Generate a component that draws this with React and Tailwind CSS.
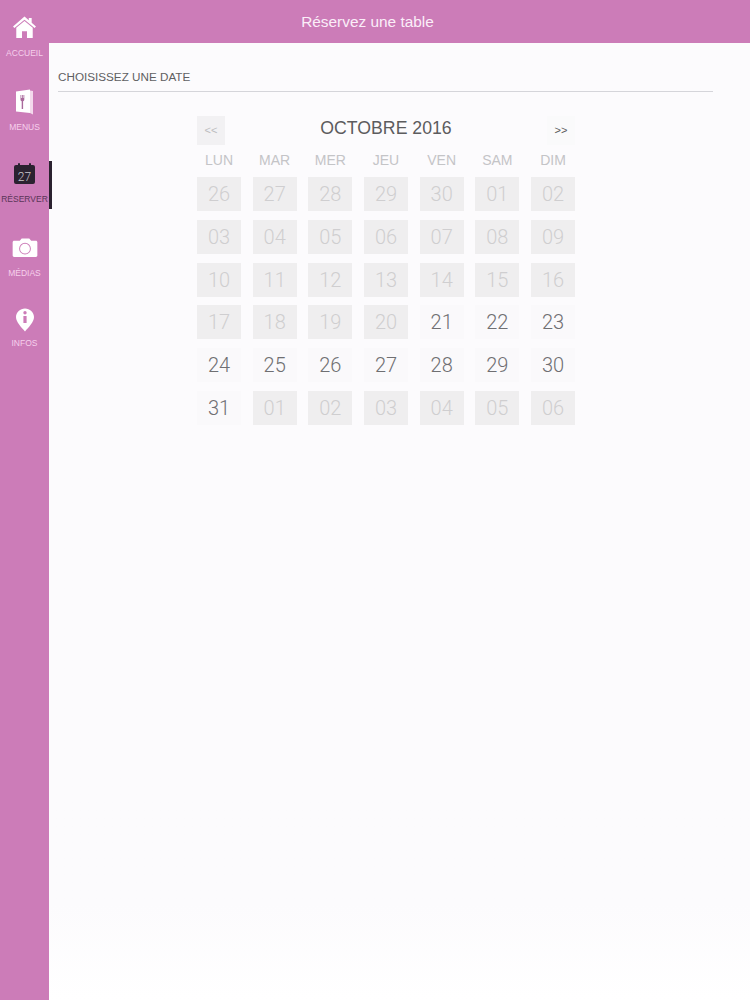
import React from 'react';

const HomeIcon = () => (
  <svg width="23" height="22" viewBox="0 0 24 23" fill="#ffffff">
    <path d="M12 0.5 L16.5 4.4 V2 H19.5 V7 L24 11 L22.6 12.6 L12 3.8 L1.4 12.6 L0 11 Z" />
    <path d="M3.4 12.4 L12 5.2 L20.6 12.4 V23 H14.6 V16 H9.4 V23 H3.4 Z" />
  </svg>
);

const MenuIcon = () => (
  <svg width="19" height="26" viewBox="0 0 19 26" className="translate-y-[1px]">
    <path fill="#ffffff" d="M1 2.5 L15 0.5 V24 L1 22.5 Z" />
    <path fill="#f3d9ec" d="M15 1.5 L18 2 V25.5 L15 24 Z" />
    <path fill="#a9699b" d="M5.5 6 H6.3 V9 H7 V6 H7.8 V9 H8.5 V6 H9.3 V10.5 C9.3 11.5 8.7 12 8.1 12.2 V20 H6.7 V12.2 C6.1 12 5.5 11.5 5.5 10.5 Z" />
  </svg>
);

const CalendarIcon = () => (
  <div className="relative mt-[2px] flex h-[19px] w-[21px] items-end justify-center rounded-[2px] bg-[#2b2230]">
    <span className="absolute -top-[2px] left-[4px] h-[5px] w-[2px] rounded-sm bg-[#2b2230]" />
    <span className="absolute -top-[2px] right-[4px] h-[5px] w-[2px] rounded-sm bg-[#2b2230]" />
    <span className="font-['Roboto',sans-serif] text-[12px] leading-[14px] font-light text-[#c9c5cb]">27</span>
  </div>
);

const CameraIcon = () => (
  <svg width="26" height="19" viewBox="0 0 26 20" className="mt-[1px]">
    <path
      fill="#ffffff"
      fillRule="evenodd"
      d="M1.5 3 H7.5 L9.5 0.5 H17.5 L19.5 3 H24.5 C25.3 3 26 3.7 26 4.5 V18.5 C26 19.3 25.3 20 24.5 20 H1.5 C0.7 20 0 19.3 0 18.5 V4.5 C0 3.7 0.7 3 1.5 3 Z M13 5 A6.2 6.2 0 1 0 13 17.4 A6.2 6.2 0 1 0 13 5 Z M13 6 A5.2 5.2 0 1 1 13 16.4 A5.2 5.2 0 1 1 13 6 Z"
    />
  </svg>
);

const InfoIcon = () => (
  <svg width="18" height="24" viewBox="0 0 18 23" className="translate-y-[3px]">
    <path
      fill="#ffffff"
      fillRule="evenodd"
      d="M9 0 C13.8 0 18 3.6 18 8.6 C18 13.6 12.5 19 9 23 C5.5 19 0 13.6 0 8.6 C0 3.6 4.2 0 9 0 Z M9 2.6 A1.7 1.7 0 1 0 9 6 A1.7 1.7 0 1 0 9 2.6 Z M7.4 7.6 V14.6 H10.6 V7.6 Z"
    />
  </svg>
);

const navItems = [
  { label: 'ACCUEIL', icon: <HomeIcon />, itemClass: 'h-[74px]' },
  { label: 'MENUS', icon: <MenuIcon />, itemClass: 'h-[72px]' },
  { label: 'RÉSERVER', icon: <CalendarIcon />, itemClass: 'h-[74px]', active: true },
  { label: 'MÉDIAS', icon: <CameraIcon />, itemClass: 'h-[70px]' },
  { label: 'INFOS', icon: <InfoIcon />, itemClass: 'h-[70px]' },
];

const dayNames = ['LUN', 'MAR', 'MER', 'JEU', 'VEN', 'SAM', 'DIM'];

const days = [
  '26', '27', '28', '29', '30', '01', '02',
  '03', '04', '05', '06', '07', '08', '09',
  '10', '11', '12', '13', '14', '15', '16',
  '17', '18', '19', '20', '21', '22', '23',
  '24', '25', '26', '27', '28', '29', '30',
  '31', '01', '02', '03', '04', '05', '06',
];

function Sidebar() {
  return (
    <aside className="relative z-10 w-[49px] shrink-0 bg-[#cc7cb8] pt-[14px]">
      {navItems.map((item) => (
        <div key={item.label} className={`relative flex flex-col items-center ${item.itemClass}`}>
          <div className="flex h-[26px] items-center justify-center">{item.icon}</div>
          <span
            className={`mt-[8px] text-[8.5px] leading-[10px] whitespace-nowrap ${
              item.active ? 'text-[#5a3557]' : 'text-[#f6d0ec]'
            }`}
          >
            {item.label}
          </span>
          {item.active && (
            <span className="absolute top-[1px] left-[49px] h-[48px] w-[3px] bg-[#2b2230]" />
          )}
        </div>
      ))}
    </aside>
  );
}

function Calendar() {
  return (
    <div className="ml-[148px] mt-[24px] w-[378px]">
      <div className="flex h-[29px] items-center justify-between">
        <div className="flex h-[29px] w-[28px] items-center justify-center bg-[#f2f1f3] text-[11px] text-[#bdbdc0]">
          &lt;&lt;
        </div>
        <div className="pb-[5px] text-[17.7px] leading-[24px] text-[#5c5c5e]">OCTOBRE 2016</div>
        <div className="flex h-[29px] w-[28px] items-center justify-center bg-[#fafafb] text-[11px] text-[#5a5a5c]">
          &gt;&gt;
        </div>
      </div>
      <div className="mt-[6px] grid h-[26px] grid-cols-7 gap-x-[11.67px]">
        {dayNames.map((name) => (
          <div key={name} className="text-center text-[14px] leading-[18px] text-[#c4c4c7]">
            {name}
          </div>
        ))}
      </div>
      <div className="grid grid-cols-7 gap-x-[11.67px] gap-y-[8.8px]">
        {days.map((day, i) => {
          const enabled = i >= 25 && i <= 35;
          return (
            <div
              key={i}
              className={`flex h-[34px] items-center justify-center font-['Roboto',sans-serif] text-[20px] font-light ${
                enabled ? 'bg-[#faf9fb] text-[#6f6f72]' : 'bg-[#efeeef] text-[#cfced0]'
              }`}
            >
              {day}
            </div>
          );
        })}
      </div>
    </div>
  );
}

export default function App() {
  return (
    <div className="flex h-[1000px] w-[750px] overflow-hidden bg-[#cc7cb8] font-['Liberation_Sans',Arial,sans-serif]">
      <Sidebar />
      <div className="flex min-w-0 flex-1 flex-col">
        <header className="flex h-[43px] shrink-0 items-center justify-center pr-[64px] text-[15.4px] text-[#fbeef8]">
          Réservez une table
        </header>
        <main className="flex-1 bg-gradient-to-b from-[#fcfbfd] from-90% to-white">
          <div className="ml-[9px] mr-[37px] flex h-[49px] items-end border-b border-[#d5d5da] pb-[6px] text-[11.7px] leading-[16px] text-[#5f5f62]">
            CHOISISSEZ UNE DATE
          </div>
          <Calendar />
        </main>
      </div>
    </div>
  );
}
